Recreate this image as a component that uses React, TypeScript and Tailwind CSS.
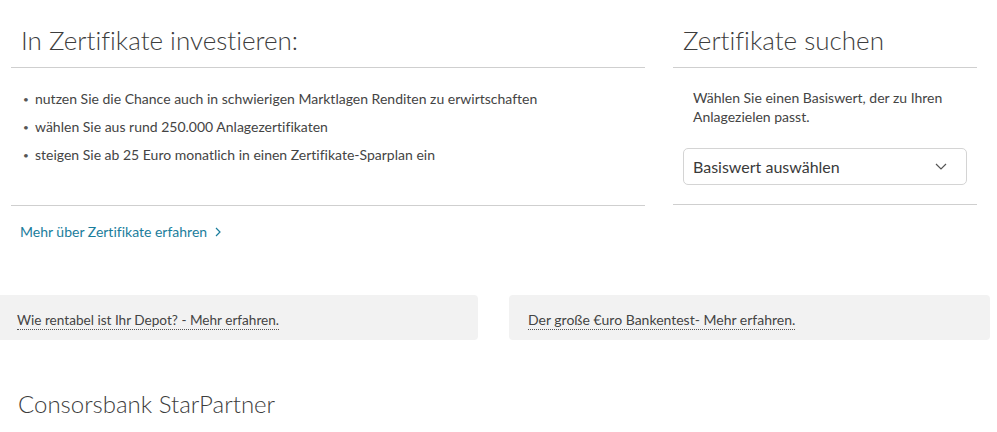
export default function App() {
  const bullets = [
    'nutzen Sie die Chance auch in schwierigen Marktlagen Renditen zu erwirtschaften',
    'wählen Sie aus rund 250.000 Anlagezertifikaten',
    'steigen Sie ab 25 Euro monatlich in einen Zertifikate-Sparplan ein',
  ]
  return (
    <div className="w-[997px] h-[432px] overflow-hidden bg-white text-[#444] [font-variant-ligatures:none]" style={{ fontFamily: 'Lato, "Open Sans", sans-serif' }}>
      <div className="flex pl-[11px]">
        <div className="w-[634px] flex flex-col">
          <div className="border-b border-[#cfcfcf]">
            <h2 className="pl-[10px] pt-[25px] pb-[12px] text-[26px] leading-[30px] font-light text-[#3d3d3d]">
              In Zertifikate investieren:
            </h2>
          </div>
          <div className="border-b border-[#cfcfcf] pt-[21px] pb-[40px]">
            <ul className="flex flex-col gap-[8px] pl-[12px] text-[14px] leading-[20px] text-[#444]">
              {bullets.map((b) => (
                <li key={b} className="flex">
                  <span className="w-[12px] text-[10px] text-[#555]">•</span>
                  <span>{b}</span>
                </li>
              ))}
            </ul>
          </div>
          <a href="#" className="mt-[16px] pl-[9px] flex items-center gap-[7px] text-[14px] leading-[20px] text-[#1a7d9c]">
            Mehr über Zertifikate erfahren
            <svg width="8" height="10" viewBox="0 0 8 10" fill="none" stroke="currentColor" strokeWidth="1.2">
              <path d="M2 1l4 4-4 4" />
            </svg>
          </a>
        </div>
        <div className="ml-[28px] w-[304px] flex flex-col">
          <div className="border-b border-[#cfcfcf]">
            <h2 className="pl-[10px] pt-[25px] pb-[12px] text-[26px] leading-[30px] font-light text-[#3d3d3d]">
              Zertifikate suchen
            </h2>
          </div>
          <div className="border-b border-[#cfcfcf] pt-[20px] pb-[19px]">
            <p className="pl-[20px] pr-[20px] text-[14px] leading-[19px] text-[#444]">
              Wählen Sie einen Basiswert, der zu Ihren Anlagezielen passt.
            </p>
            <div className="mt-[22px] ml-[10px] w-[284px] h-[37px] rounded-[5px] border border-[#d4d4d4] flex items-center justify-between pl-[9px] pr-[19px] text-[16px] text-[#3a3a3a]">
              <span>Basiswert auswählen</span>
              <svg width="12" height="7" viewBox="0 0 12 7" fill="none" stroke="#555" strokeWidth="1.2">
                <path d="M1 1l5 5 5-5" />
              </svg>
            </div>
          </div>
        </div>
      </div>

      <div className="flex mt-[53px]">
        <div className="w-[478px] h-[45px] bg-[#f2f2f2] rounded-r-[4px] flex items-center pl-[17px] pt-[5px]">
          <a href="#" className="text-[13.6px] leading-[18px] text-[#444] border-b border-dotted border-[#555]">
            Wie rentabel ist Ihr Depot? - Mehr erfahren.
          </a>
        </div>
        <div className="ml-[31px] w-[481px] h-[45px] bg-[#f2f2f2] rounded-[4px] flex items-center pl-[19px] pt-[5px]">
          <a href="#" className="text-[14px] leading-[18px] text-[#444] border-b border-dotted border-[#555]">
            Der große €uro Bankentest- Mehr erfahren.
          </a>
        </div>
      </div>

      <h2 className="mt-[50px] pl-[18px] text-[24px] leading-[28px] font-light text-[#3d3d3d]">
        Consorsbank StarPartner
      </h2>
    </div>
  )
}
